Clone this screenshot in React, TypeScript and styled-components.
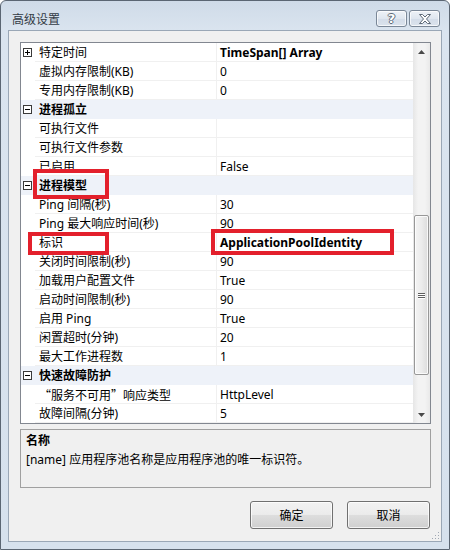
import React from 'react';
import styled, { createGlobalStyle } from 'styled-components';

const GlobalStyle = createGlobalStyle`
  html, body {
    margin: 0;
    padding: 0;
    background: #ffffff;
  }
  body {
    font-family: "Noto Sans", "Noto Sans CJK SC", sans-serif;
    font-size: 12px;
    color: #000000;
  }
`;

interface RowI {
  name: string;
  value?: string;
  category?: boolean;
  expander?: 'plus' | 'minus';
  boldValue?: boolean;
  markName?: boolean;
  markValue?: boolean;
  cjkName?: boolean;
}

const rows: RowI[] = [
  { name: '特定时间', value: 'TimeSpan[] Array', expander: 'plus', boldValue: true },
  { name: '虚拟内存限制(KB)', value: '0' },
  { name: '专用内存限制(KB)', value: '0' },
  { name: '进程孤立', category: true, expander: 'minus' },
  { name: '可执行文件', value: '' },
  { name: '可执行文件参数', value: '' },
  { name: '已启用', value: 'False' },
  { name: '进程模型', category: true, expander: 'minus', markName: true },
  { name: 'Ping 间隔(秒)', value: '30' },
  { name: 'Ping 最大响应时间(秒)', value: '90' },
  { name: '标识', value: 'ApplicationPoolIdentity', boldValue: true, markName: true, markValue: true },
  { name: '关闭时间限制(秒)', value: '90' },
  { name: '加载用户配置文件', value: 'True' },
  { name: '启动时间限制(秒)', value: '90' },
  { name: '启用 Ping', value: 'True' },
  { name: '闲置超时(分钟)', value: '20' },
  { name: '最大工作进程数', value: '1' },
  { name: '快速故障防护', category: true, expander: 'minus' },
  { name: '“服务不可用”响应类型', value: 'HttpLevel', cjkName: true },
  { name: '故障间隔(分钟)', value: '5' },
];

const Window = styled.div`
  width: 450px;
  height: 550px;
  box-sizing: border-box;
  border: 1px solid #5b6673;
  border-radius: 6px 6px 0 0;
  background: linear-gradient(#cfdbe8 0px, #dae4ef 30px, #d6e1ed 100%);
  padding: 0 7px 7px 7px;
  display: flex;
  flex-direction: column;
`;

const TitleBar = styled.div`
  height: 29px;
  display: flex;
  align-items: flex-start;
  justify-content: space-between;
  padding: 0 2px 0 4px;
`;

const Title = styled.div`
  padding-top: 10px;
  line-height: 18px;
  font-size: 12px;
  color: #333b45;
`;

const TitleButtons = styled.div`
  display: flex;
  gap: 2px;
  padding-top: 9px;
`;

const CaptionButton = styled.div`
  width: 29px;
  height: 15px;
  border: 1px solid #7a8797;
  border-radius: 3px;
  background: linear-gradient(#eef2f7 0%, #dfe6ef 50%, #d3dce8 51%, #dbe3ed 100%);
  box-shadow: inset 0 0 0 1px rgba(255, 255, 255, 0.7);
  display: flex;
  align-items: center;
  justify-content: center;
`;

const HelpGlyph = styled.span`
  font-family: "DejaVu Sans", sans-serif;
  font-weight: bold;
  font-size: 13px;
  line-height: 13px;
  color: #ffffff;
  text-shadow: -1px 0 #5e6a78, 1px 0 #5e6a78, 0 -1px #5e6a78, 0 1px #5e6a78;
`;

const Client = styled.div`
  flex: 1;
  position: relative;
  border: 1px solid #9aa7b6;
  background: #f0f0f0;
  padding: 11px 10px 0 11px;
  display: flex;
  flex-direction: column;
`;

const Grid = styled.div`
  height: 382px;
  box-sizing: border-box;
  border: 1px solid #828790;
  background: #ffffff;
  display: flex;
`;

const RowList = styled.div`
  flex: 1;
  overflow: hidden;
  display: flex;
  flex-direction: column;
`;

const Row = styled.div<{ $category?: boolean }>`
  position: relative;
  height: 19px;
  flex: 0 0 19px;
  display: grid;
  grid-template-columns: 14px 182px 1fr;
  background: ${(p) => (p.$category ? '#eef2f9' : '#ffffff')};
`;

const Gutter = styled.div`
  display: flex;
  align-items: center;
  padding-left: 2px;
`;

const ExpanderBox = styled.svg`
  display: block;
`;

const NameCell = styled.div<{ $category?: boolean }>`
  box-sizing: border-box;
  padding: 1px 0 0 4px;
  line-height: 17px;
  white-space: nowrap;
  overflow: hidden;
  font-weight: ${(p) => (p.$category ? 'bold' : 'normal')};
  border-right: ${(p) => (p.$category ? 'none' : '1px solid #f0f0f0')};
  border-bottom: ${(p) => (p.$category ? 'none' : '1px solid #f0f0f0')};
  ${(p) => (p.$category ? 'grid-column: 2 / 4;' : '')}
`;

const CjkText = styled.span`
  font-family: "Noto Sans CJK SC", sans-serif;
`;

const ValueCell = styled.div<{ $bold?: boolean }>`
  box-sizing: border-box;
  padding: 1px 0 0 3px;
  line-height: 17px;
  white-space: nowrap;
  overflow: hidden;
  font-weight: ${(p) => (p.$bold ? 'bold' : 'normal')};
  border-bottom: 1px solid #f0f0f0;
`;

const Mark = styled.div<{ $left: number; $top: number; $width: number; $height: number }>`
  position: absolute;
  z-index: 2;
  left: ${(p) => p.$left}px;
  top: ${(p) => p.$top}px;
  width: ${(p) => p.$width}px;
  height: ${(p) => p.$height}px;
  box-sizing: border-box;
  border: 4px solid #e3202c;
  pointer-events: none;
`;

const ScrollBar = styled.div`
  width: 17px;
  display: flex;
  flex-direction: column;
  background: linear-gradient(90deg, #e6e6e6 0%, #f3f3f3 30%, #f3f3f3 70%, #e9e9e9 100%);
`;

const ArrowButton = styled.div`
  height: 17px;
  display: flex;
  align-items: center;
  justify-content: center;
`;

const Track = styled.div`
  flex: 1;
  display: flex;
  flex-direction: column;
`;

const Thumb = styled.div<{ $offset: number }>`
  margin: ${(p) => p.$offset}px 1px 0;
  height: 160px;
  box-sizing: border-box;
  border: 1px solid #989898;
  border-radius: 2px;
  background: linear-gradient(90deg, #f4f4f4 0%, #ececec 50%, #dcdcdc 100%);
  box-shadow: inset 0 0 0 1px rgba(255, 255, 255, 0.8);
  display: flex;
  flex-direction: column;
  align-items: center;
  justify-content: center;
  gap: 1px;
`;

const GripLine = styled.div`
  width: 7px;
  height: 1px;
  background: #5e5e5e;
  box-shadow: 0 1px 0 #ffffff;
`;

const Description = styled.div`
  margin-top: 5px;
  height: 59px;
  box-sizing: border-box;
  border: 1px solid #a0a0a0;
  padding: 1px 5px;
  line-height: 19px;
`;

const DescTitle = styled.div`
  font-weight: bold;
`;

const ButtonRow = styled.div`
  display: flex;
  justify-content: flex-end;
  gap: 14px;
  margin-top: 13px;
  padding-right: 1px;
`;

const Button = styled.button`
  width: 83px;
  height: 28px;
  border: 1px solid #707070;
  border-radius: 3px;
  background: linear-gradient(#f2f2f2 0%, #ebebeb 48%, #dddddd 52%, #cfcfcf 100%);
  box-shadow: inset 0 0 0 1px rgba(255, 255, 255, 0.75);
  font-family: "Noto Sans", "Noto Sans CJK SC", sans-serif;
  font-size: 12px;
  color: #000000;
  padding: 0;
`;

const Grip = styled.svg`
  position: absolute;
  right: 1px;
  bottom: 1px;
`;

const Expander = ({ kind }: { kind: 'plus' | 'minus' }) => (
  <ExpanderBox width="9" height="9" viewBox="0 0 9 9">
    <rect x="0.5" y="0.5" width="8" height="8" fill="#ffffff" stroke="#3a3a3a" />
    <line x1="2" y1="4.5" x2="7" y2="4.5" stroke="#000000" />
    {kind === 'plus' && <line x1="4.5" y1="2" x2="4.5" y2="7" stroke="#000000" />}
  </ExpanderBox>
);

const PropertyRow = ({ row }: { row: RowI }) => (
  <Row $category={row.category}>
    <Gutter>{row.expander && <Expander kind={row.expander} />}</Gutter>
    <NameCell $category={row.category}>
      {row.cjkName ? <CjkText>{row.name}</CjkText> : row.name}
    </NameCell>
    {!row.category && <ValueCell $bold={row.boldValue}>{row.value}</ValueCell>}
    {row.markName && row.category && <Mark $left={12} $top={-7} $width={76} $height={30} />}
    {row.markName && !row.category && <Mark $left={7} $top={-1} $width={81} $height={23} />}
    {row.markValue && <Mark $left={190} $top={-4} $width={183} $height={26} />}
  </Row>
);

const App = () => {
  return (
    <>
      <GlobalStyle />
      <Window>
        <TitleBar>
          <Title>高级设置</Title>
          <TitleButtons>
            <CaptionButton>
              <HelpGlyph>?</HelpGlyph>
            </CaptionButton>
            <CaptionButton>
              <svg width="14" height="10" viewBox="0 0 14 10">
                <path
                  d="M1.5 0.5 H4.5 L7 3 L9.5 0.5 H12.5 L8.5 5 L12.5 9.5 H9.5 L7 7 L4.5 9.5 H1.5 L5.5 5 Z"
                  fill="#ffffff"
                  stroke="#5e6a78"
                  strokeWidth="1"
                />
              </svg>
            </CaptionButton>
          </TitleButtons>
        </TitleBar>
        <Client>
          <Grid>
            <RowList>
              {rows.map((row, i) => (
                <PropertyRow key={i} row={row} />
              ))}
            </RowList>
            <ScrollBar>
              <ArrowButton>
                <svg width="7" height="4" viewBox="0 0 7 4">
                  <path d="M3.5 0 L7 4 H0 Z" fill="#4a4a4a" />
                </svg>
              </ArrowButton>
              <Track>
                <Thumb $offset={155}>
                  <GripLine />
                  <GripLine />
                  <GripLine />
                </Thumb>
              </Track>
              <ArrowButton>
                <svg width="7" height="4" viewBox="0 0 7 4">
                  <path d="M0 0 H7 L3.5 4 Z" fill="#4a4a4a" />
                </svg>
              </ArrowButton>
            </ScrollBar>
          </Grid>
          <Description>
            <DescTitle>名称</DescTitle>
            <div>[name] 应用程序池名称是应用程序池的唯一标识符。</div>
          </Description>
          <ButtonRow>
            <Button>确定</Button>
            <Button>取消</Button>
          </ButtonRow>
          <Grip width="8" height="8" viewBox="0 0 8 8">
            <rect x="6" y="0" width="1" height="1" fill="#a0a8b4" />
            <rect x="3" y="3" width="1" height="1" fill="#a0a8b4" />
            <rect x="6" y="3" width="1" height="1" fill="#a0a8b4" />
            <rect x="0" y="6" width="1" height="1" fill="#a0a8b4" />
            <rect x="3" y="6" width="1" height="1" fill="#a0a8b4" />
            <rect x="6" y="6" width="1" height="1" fill="#a0a8b4" />
          </Grip>
        </Client>
      </Window>
    </>
  );
};

export default App;
